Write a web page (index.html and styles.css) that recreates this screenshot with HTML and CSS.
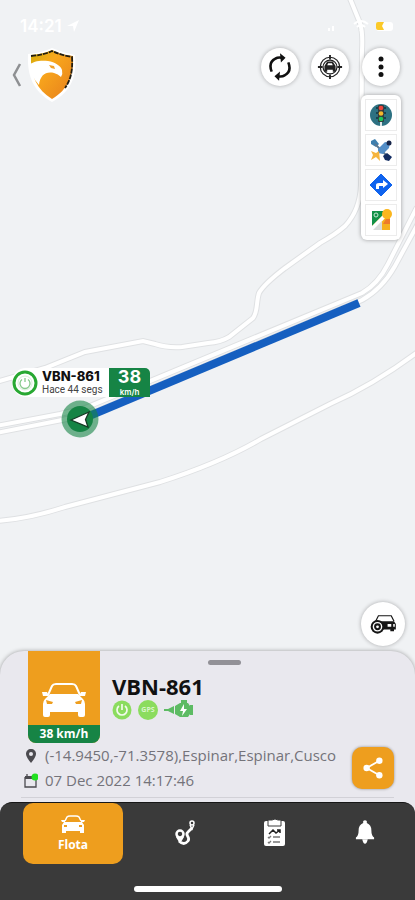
FILE: index.html
```html
<!DOCTYPE html>
<html lang="es">

<head>
    <meta charset="UTF-8">
    <meta name="viewport" content="width=device-width, initial-scale=1.0">
    <title>VBN-861 - Flota</title>
    <link rel="stylesheet" href="styles.css">
</head>

<body>

    <div class="app">
        <!-- Map roads and route -->
        <svg class="map" viewBox="0 0 415 900" preserveAspectRatio="xMidYMin slice" aria-hidden="true">
            <defs>
                <path id="road-north" d="M349 -4L360 23Q363 32 362 50L361 185Q360 210 345 226Q336 234 320 243L285 268Q264 284 259 293C256 302 258 312 253 318L229 337Q221 342 208 343L182 347Q167 348 155 344L143 341L85 352L45 368L-4 382" />
                <path id="road-main" d="M-4 426L60 414L85 408L362 293Q378 284 388 264L417 207" />
                <path id="road-main-2" d="M-4 433L62 420L90 414L362 300Q382 289 395 266L421 218" />
                <path id="road-south" d="M-4 521Q28 519 65 507L160 482Q220 463 261 439L330 404Q375 384 419 351" />
            </defs>
            <g class="road-edge">
                <use href="#road-north" />
                <use href="#road-main" />
                <use href="#road-main-2" />
                <use href="#road-south" />
            </g>
            <g class="road">
                <use href="#road-north" />
                <use href="#road-main" />
                <use href="#road-main-2" />
                <use href="#road-south" />
            </g>
            <path class="route" d="M82 419L359 303" />
        </svg>

        <!-- Vehicle on the map -->
        <div class="marker">
            <div class="marker-label">
                <svg class="marker-power" viewBox="0 0 26 26">
                    <circle cx="13" cy="13" r="11" fill="#fff" stroke="#28a832" stroke-width="3" />
                    <circle cx="13" cy="13" r="7" fill="none" stroke="#d9eeda" />
                    <path d="M10 9.500A5 5 0 1 0 16 9.500M13 8V12" fill="none" stroke="#86c98b" stroke-width="1.300" />
                </svg>
                <div class="marker-text">
                    <strong>VBN-861</strong>
                    <span>Hace 44 segs</span>
                </div>
                <div class="marker-speed">
                    <strong>38</strong>
                    <span>km/h</span>
                </div>
            </div>
            <svg class="marker-point" viewBox="0 0 38 38">
                <circle cx="19" cy="19" r="18.500" fill="#168445" opacity=".6" />
                <circle cx="19" cy="19" r="13" fill="#168445" />
                <path d="M10 20L28 12L24.500 19.500L27 27Z" fill="#fff" stroke="#173a25" stroke-width="1.300" />
            </svg>
        </div>

        <div class="status-bar">
            <span>14:21</span>
            <svg width="14" height="14" viewBox="0 0 14 14"><path d="M1 7L13 1L8 13L7 7Z" fill="#fff" /></svg>
            <svg class="status-icons" width="68" height="14" viewBox="0 0 68 14">
                <path d="M1 9H3V12H1ZM5 7H7V12H5Z" fill="#fff" />
                <path d="M27 5Q34 -1 41 5M30 8Q34 4 38 8M33 11L34 12L35 11" fill="none" stroke="#fff" stroke-width="2" />
                <rect x="49" y="3" width="17" height="9" rx="3" fill="#fff" />
                <path d="M51 3H57L55 7L57 11H51Q49 11 49 9V5Q49 3 51 3Z" fill="#fbc928" />
            </svg>
        </div>

        <header class="top-bar">
            <button class="back" type="button" aria-label="Atrás">
                <svg width="10" height="26" viewBox="0 0 10 26"><path d="M8 2L2 13L8 24" fill="none" stroke="#8e9092" stroke-width="2.500" /></svg>
            </button>
            <svg class="logo" width="50" height="54" viewBox="0 0 50 54">
                <defs>
                    <linearGradient id="shield" x1="0" y1="0" x2="1" y2="1">
                        <stop offset="0" stop-color="#d0ad08" />
                        <stop offset=".35" stop-color="#f9a81c" />
                        <stop offset="1" stop-color="#e67e1d" />
                    </linearGradient>
                </defs>
                <path d="M1 6Q14 5 25 0Q36 5 48 7C50 28 45 43 25 54C6 43 0 28 1 6Z" fill="#fff" />
                <path d="M4 7Q17 6 25 2Q34 7 46 8C47 27 41 42 25 51C10 42 3 27 4 7Z" fill="url(#shield)" />
                <path d="M4 8Q17 7 25 3Q34 7 45 9C46 24 43 33 38 40" fill="none" stroke="#211d12" stroke-width="1.800" stroke-dasharray="5 1" />
                <path d="M2 17C6 13 14 12 21 13C28 14 34 18 35 22Q36 26 34 29Q31 26 27 25C19 23 13 27 12 37Q3 27 2 17Z" fill="#fff" />
                <path d="M22 17L27 18L28 21L24 20Z" fill="#f0a12a" />
            </svg>
            <div class="actions">
                <button class="round-btn" type="button" aria-label="Actualizar">
                    <svg width="24" height="28" viewBox="0 0 26 28" fill="none" stroke="#111" stroke-width="2.800">
                        <path d="M4 19Q0 9 8 5Q11 3 15 4" />
                        <path d="M22 9Q26 19 18 23Q15 25 11 24" />
                        <path d="M13 -1L19 4L14 9ZM13 19L7 24L12 29Z" fill="#111" stroke="none" />
                    </svg>
                </button>
                <button class="round-btn" type="button" aria-label="Centrar vehículo">
                    <svg width="26" height="26" viewBox="0 0 28 28" fill="none" stroke="#222">
                        <circle cx="14" cy="14" r="10.500" stroke-width="1.300" />
                        <circle cx="14" cy="14" r="7.500" stroke-width="1.300" />
                        <path d="M14 1V6M14 22V27M1 14H6M22 14H27" stroke-width="2" />
                        <path d="M8 13L11 8H17L20 13V19H17V17H11V19H8Z" fill="#222" stroke="none" />
                        <path d="M11 12L12 10H16L17 12Z" fill="#fff" stroke="none" />
                    </svg>
                </button>
                <div class="menu">
                    <button class="round-btn" type="button" aria-label="Más opciones">
                        <svg width="6" height="22" viewBox="0 0 6 22" fill="#111">
                            <circle cx="3" cy="3" r="2.500" />
                            <circle cx="3" cy="11" r="2.500" />
                            <circle cx="3" cy="18.500" r="2.500" />
                        </svg>
                    </button>
                    <div class="layers">
                        <button type="button" aria-label="Tráfico">
                            <svg viewBox="0 0 24 24">
                                <circle cx="12" cy="12" r="11" fill="#2d7182" />
                                <path d="M7 5H17M7 10H17M7 15H17" stroke="#19434d" stroke-width="2" />
                                <rect x="9" y="2" width="6" height="17" rx="1" fill="#343c3e" />
                                <rect x="11" y="19" width="2" height="4" fill="#dce6e8" />
                                <circle cx="12" cy="5" r="2.300" fill="#ed453d" />
                                <circle cx="12" cy="10.500" r="2.300" fill="#f5b82c" />
                                <circle cx="12" cy="16" r="2.300" fill="#1ec65b" />
                            </svg>
                        </button>
                        <button type="button" aria-label="Satélite">
                            <svg viewBox="0 0 24 24">
                                <path d="M2 3L6 1L10 6L7 9L2 6Z" fill="#3e7fae" />
                                <path d="M6 6L18 18" stroke="#5d7890" stroke-width="2" />
                                <path d="M9 11L16 4L21 5L20 10L14 16L9 15Z" fill="#538ec8" />
                                <circle cx="20" cy="5" r="2.500" fill="#17254a" />
                                <path d="M14 18L18 15L23 19L20 23L16 22Z" fill="#122c62" />
                                <path d="M2 13L7 15L10 13L11 23L7 19L2 22L4 17Z" fill="#f5b43d" />
                            </svg>
                        </button>
                        <button type="button" aria-label="Cómo llegar">
                            <svg viewBox="0 0 24 24">
                                <path d="M12 1L23 12L12 23L1 12Z" fill="#0f63ee" stroke="#0f63ee" stroke-linejoin="round" />
                                <path d="M7 16V12Q7 10 10 10H14V7L19 11L14 15V13H10V16Z" fill="#fff" />
                            </svg>
                        </button>
                        <button type="button" aria-label="Mapa">
                            <svg viewBox="0 0 24 24">
                                <rect x="3" y="3" width="18" height="19" fill="#f6b01e" />
                                <path d="M3 3H18L3 18Z" fill="#129247" />
                                <path d="M3 18L15 6H18V8L5 22H3Z" fill="#fff" />
                                <path d="M4 22L13 13V22Z" fill="#d9dcda" />
                                <circle cx="18" cy="6" r="5" fill="#fbb61d" />
                                <path d="M17 11H21V16H14Z" fill="#ee7a2a" />
                                <circle cx="7" cy="7" r="2" fill="none" stroke="#c8ead4" />
                            </svg>
                        </button>
                    </div>
                </div>
            </div>
        </header>

        <div class="map-footer">
            <button class="round-btn large" type="button" aria-label="Ver vehículo">
                <svg width="28" height="22" viewBox="0 0 30 24">
                    <path d="M7 9L10 3H24L27 9" fill="none" stroke="#161616" stroke-width="1.300" />
                    <path d="M5 9H27L29 12V18H27V20H23V18H10Z" fill="#161616" />
                    <rect x="20" y="12" width="4" height="3" fill="#fff" />
                    <rect x="26" y="12" width="2" height="3" fill="#ddd" />
                    <circle cx="9" cy="15" r="7.500" fill="#161616" />
                    <circle cx="9" cy="15" r="4.500" fill="none" stroke="#fff" stroke-width="1.500" />
                    <circle cx="9" cy="15" r="1.500" fill="#fff" />
                </svg>
            </button>
        </div>

        <section class="sheet">
            <div class="vehicle">
                <div class="vehicle-tile">
                    <svg width="46" height="36" viewBox="0 0 46 36">
                        <path d="M7 12L11 3Q12 1 15 1H31Q34 1 35 3L39 12" fill="none" stroke="#fff" stroke-width="2" />
                        <path d="M9 11H37L42 16Q44 18 44 21V32Q44 34 42 34H39Q37 34 37 32V29H9V32Q9 34 7 34H4Q2 34 2 32V21Q2 18 4 16Z" fill="#fff" />
                        <path d="M1 9H6L8 13H2ZM45 9H40L38 13H44Z" fill="#fff" />
                        <path d="M5 17L12 19L11 21H6ZM41 17L34 19L35 21H40Z" fill="#ee9e1e" />
                    </svg>
                    <span class="vehicle-speed">38 km/h</span>
                </div>
                <div class="vehicle-info">
                    <h1>VBN-861</h1>
                    <div class="vehicle-state">
                        <svg width="20" height="20" viewBox="0 0 20 20">
                            <circle cx="10" cy="10" r="9.500" fill="#8bdc5e" />
                            <path d="M7 6A5 5 0 1 0 13 6M10 4V10" fill="none" stroke="#f2fbed" stroke-width="1.700" />
                        </svg>
                        <span class="gps">GPS</span>
                        <svg width="30" height="20" viewBox="0 0 30 20" fill="#5dbb63">
                            <path d="M0 9H4V11H0ZM4 9L10 6V14L4 11ZM11 6L16 3H24L26 6V14L24 17H16L11 14ZM17 0H23V3H17ZM26 5H29V15H26Z" />
                            <path d="M20 4L16 11H19L18 16L23 9H20Z" fill="#fff" />
                        </svg>
                    </div>
                </div>
                <div class="handle"></div>
            </div>

            <div class="details">
                <div class="detail-rows">
                    <p>
                        <svg width="14" height="16" viewBox="0 0 14 16">
                            <path d="M7 1C4 1 2 3 2 6C2 9 7 15 7 15C7 15 12 9 12 6C12 3 10 1 7 1Z" fill="#4c4b50" />
                            <circle cx="7" cy="6" r="2" fill="#e9e8ee" />
                        </svg>
                        <span>(-14.9450,-71.3578),Espinar,Espinar,Cusco</span>
                    </p>
                    <p>
                        <svg width="14" height="16" viewBox="0 0 14 16">
                            <path d="M1 3H9V6H1Z" fill="#4c4b50" />
                            <path d="M1 4V14H12V7M3 1V4" fill="none" stroke="#4c4b50" stroke-width="1.300" />
                            <circle cx="11" cy="4" r="3.500" fill="#21e020" />
                        </svg>
                        <span>07 Dec 2022 14:17:46</span>
                    </p>
                </div>
                <button class="share" type="button" aria-label="Compartir">
                    <svg width="20" height="22" viewBox="0 0 22 24">
                        <path d="M18 4L4 12L18 20" fill="none" stroke="#fff" stroke-width="2" />
                        <circle cx="18" cy="4" r="3.500" fill="#fff" />
                        <circle cx="4" cy="12" r="3.500" fill="#fff" />
                        <circle cx="18" cy="20" r="3.500" fill="#fff" />
                    </svg>
                </button>
            </div>

            <nav class="tabs">
                <a class="tab active" href="#flota">
                    <svg width="26" height="20" viewBox="0 0 26 20">
                        <path d="M5 6L7 2Q8 1 10 1H16Q18 1 19 2L21 6" fill="none" stroke="#fff" stroke-width="1.500" />
                        <path d="M4 7H22L24 10V18H20V16H6V18H2V10ZM1 5H5V7H2ZM25 5H21V7H24Z" fill="#fff" />
                        <path d="M4 10H7V12H4ZM19 10H22V12H19Z" fill="#ee9e1e" />
                    </svg>
                    <span>Flota</span>
                </a>
                <a class="tab" href="#rutas" aria-label="Rutas">
                    <svg width="24" height="28" viewBox="0 0 24 28" fill="none" stroke="#fff">
                        <circle cx="7" cy="15" r="3.500" stroke-width="2.500" />
                        <path d="M4 17L7 22L10 17M6 22Q11 27 15 22C18 18 11 16 15 13L19 9" stroke-width="2.800" />
                        <circle cx="19" cy="4" r="2" stroke-width="1.500" />
                        <path d="M17 6L19 10L21 6" stroke-width="1.500" />
                    </svg>
                </a>
                <a class="tab" href="#reportes" aria-label="Reportes">
                    <svg width="24" height="28" viewBox="0 0 24 28">
                        <rect x="1" y="2" width="21" height="25" rx="2" fill="#fff" />
                        <path d="M5 1H9Q12 -1 15 1H18V7H5Z" fill="#fff" stroke="#3a3a3a" />
                        <path d="M6 15L10 11L13 14L17 11M14 11H17V14" fill="none" stroke="#222" stroke-width="1.500" />
                        <path d="M5 18L6 19L8 17M10 18H17M5 23L6 24L8 22M10 23H17" fill="none" stroke="#777" stroke-width="1.300" />
                    </svg>
                </a>
                <a class="tab" href="#alertas" aria-label="Alertas">
                    <svg width="20" height="26" viewBox="0 0 22 28" fill="#fff">
                        <path d="M9 4V2Q11 0 13 2V4Q18 6 18 12Q18 18 21 20V22H1V20Q4 18 4 12Q4 6 9 4Z" />
                        <path d="M8 22H14Q13 27 11 27Q9 27 8 22Z" />
                    </svg>
                </a>
                <div class="home-bar"></div>
            </nav>
        </section>
    </div>

</body>

</html>
```
FILE: styles.css
```css
* {
    box-sizing: border-box;
}

body {
    margin: 0;
    font-family: 'Open Sans', 'Noto Sans', sans-serif;
    background-color: #f0f2f4;
    color: #111;
}

button {
    padding: 0;
    border: 0;
    background: none;
}

svg {
    display: block;
    flex-shrink: 0;
}

h1,
p {
    margin: 0;
}

.app {
    position: relative;
    display: flex;
    flex-direction: column;
    min-height: 100vh;
    overflow: hidden;
}

/* Map */
.map {
    position: absolute;
    top: 0;
    left: 0;
    width: 100%;
    height: 100%;
}

.road-edge {
    fill: none;
    stroke: #dfe1e3;
    stroke-width: 6;
}

.road {
    fill: none;
    stroke: #fff;
    stroke-width: 4;
}

.route {
    fill: none;
    stroke: #155fc0;
    stroke-width: 8;
}

.marker {
    position: absolute;
    top: 368px;
    left: 12px;
}

.marker-label {
    display: flex;
    align-items: center;
    height: 29px;
    background-color: #fff;
    border-radius: 14px 4px 0 14px;
}

.marker-power {
    width: 26px;
    height: 26px;
}

.marker-text {
    display: flex;
    flex-direction: column;
    width: 71px;
    padding-left: 4px;
    font-family: Inter, sans-serif;
    white-space: nowrap;
}

.marker-text strong {
    font-size: 13px;
    line-height: 15px;
    font-weight: 800;
}

.marker-text span {
    font-family: Roboto, sans-serif;
    font-size: 10px;
    line-height: 12px;
    color: #444;
}

.marker-speed {
    display: flex;
    flex-direction: column;
    align-items: center;
    width: 41px;
    height: 29px;
    background-color: #168445;
    border-radius: 0 5px 0 0;
    color: #fff;
    font-family: Inter, sans-serif;
}

.marker-speed strong {
    font-size: 18px;
    line-height: 18px;
}

.marker-speed span {
    font-size: 8px;
    line-height: 12px;
    font-weight: 600;
}

.marker-point {
    width: 38px;
    height: 38px;
    margin: 3px 0 0 49px;
}

/* Top of the screen */
.status-bar {
    position: relative;
    display: flex;
    align-items: center;
    gap: 4px;
    height: 48px;
    padding: 4px 20px 0;
    color: #fff;
    font-family: Inter, sans-serif;
    font-size: 17px;
    font-weight: 600;
}

.status-icons {
    margin-left: auto;
}

.top-bar {
    position: relative;
    display: flex;
    align-items: flex-start;
    padding: 0 14px 0 12px;
}

.back {
    margin-top: 14px;
}

.logo {
    margin-left: 5px;
}

.actions {
    display: flex;
    gap: 12px;
    margin-left: auto;
}

.round-btn {
    display: flex;
    align-items: center;
    justify-content: center;
    width: 38px;
    height: 38px;
    background-color: #fff;
    border-radius: 50%;
    box-shadow: 0 0 4px rgba(0, 0, 0, 0.3);
}

.round-btn.large {
    width: 44px;
    height: 44px;
}

.menu {
    display: flex;
    flex-direction: column;
    align-items: center;
    gap: 9px;
}

.layers {
    display: flex;
    flex-direction: column;
    gap: 3px;
    padding: 4px;
    background-color: #fff;
    border-radius: 6px;
    box-shadow: 0 0 4px rgba(0, 0, 0, 0.35);
}

.layers button {
    display: flex;
    align-items: center;
    justify-content: center;
    width: 32px;
    height: 32px;
    border: 1px solid #ececec;
}

.layers svg {
    width: 24px;
    height: 24px;
}

.map-footer {
    position: relative;
    display: flex;
    justify-content: flex-end;
    margin-top: auto;
    padding: 0 10px 5px;
}

/* Vehicle sheet */
.sheet {
    position: relative;
    background-color: #e9e8ee;
    border-radius: 24px 24px 0 0;
    box-shadow: 0 0 4px rgba(0, 0, 0, 0.35);
}

.vehicle {
    position: relative;
    display: flex;
    gap: 12px;
    padding-left: 28px;
}

.vehicle-tile {
    display: flex;
    flex-direction: column;
    align-items: center;
    width: 72px;
    height: 92px;
    padding-top: 32px;
    overflow: hidden;
    background-color: #ee9e1e;
    border-radius: 0 0 8px 8px;
}

.vehicle-speed {
    width: 100%;
    margin-top: auto;
    background-color: #168445;
    color: #fff;
    font-size: 12px;
    line-height: 18px;
    font-weight: 700;
    text-align: center;
}

.vehicle-info {
    padding-top: 21px;
}

.vehicle-info h1 {
    font-size: 22px;
    line-height: 28px;
    font-weight: 700;
}

.vehicle-state {
    display: flex;
    align-items: center;
    gap: 6px;
}

.gps {
    width: 20px;
    height: 20px;
    background-color: #8bdc5e;
    border-radius: 50%;
    color: #d9f5ca;
    font-size: 7px;
    line-height: 20px;
    font-weight: 700;
    text-align: center;
}

/* Drag handle, centred over the sheet */
.handle {
    position: absolute;
    top: 9px;
    left: 50%;
    width: 33px;
    height: 5px;
    background-color: #929197;
    border-radius: 3px;
}

.details {
    display: flex;
    align-items: center;
    justify-content: space-between;
    margin: 0 21px;
    padding-bottom: 4px;
    border-bottom: 1px solid #d2d1d7;
}

.detail-rows {
    padding-left: 3px;
}

.detail-rows p {
    display: flex;
    align-items: center;
    gap: 7px;
    color: #74737a;
    font-size: 15px;
    line-height: 25px;
    white-space: nowrap;
}

.share {
    display: flex;
    align-items: center;
    justify-content: center;
    width: 42px;
    height: 42px;
    background-color: #ee9e1e;
    border-radius: 10px;
    box-shadow: 0 0 3px rgba(0, 0, 0, 0.4);
}

/* Bottom tabs */
.tabs {
    position: relative;
    display: flex;
    height: 98px;
    margin-top: 4px;
    padding: 0 5px 0 23px;
    background-color: #3a3a3a;
    border-top: 1px solid #161616;
    border-radius: 12px 12px 0 0;
}

.tab {
    flex: 1;
    display: flex;
    flex-direction: column;
    align-items: center;
    height: 61px;
    padding-top: 16px;
    color: #fff;
    text-decoration: none;
}

.tab.active {
    flex: 0 0 100px;
    margin-right: 17px;
    padding-top: 12px;
    background-color: #ee9e1e;
    border-radius: 10px;
}

.tab span {
    font-size: 12px;
    line-height: 20px;
    font-weight: 700;
}

.home-bar {
    position: absolute;
    bottom: 8px;
    left: 50%;
    width: 148px;
    height: 6px;
    margin-left: -74px;
    background-color: #fff;
    border-radius: 3px;
}
```
